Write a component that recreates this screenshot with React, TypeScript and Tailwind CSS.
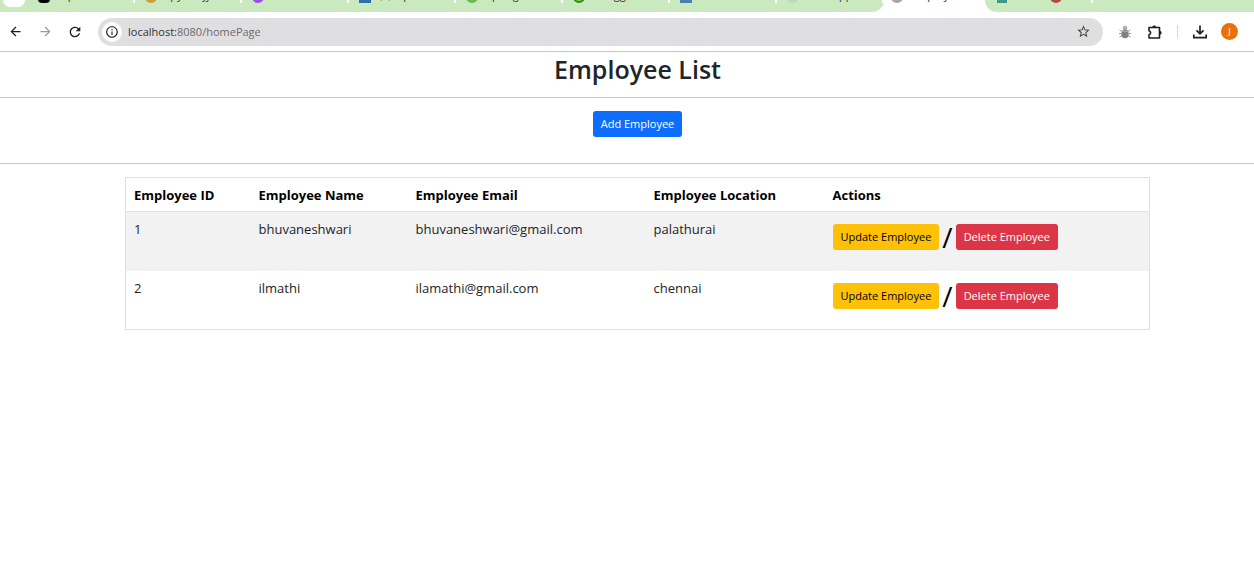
import type { ReactNode } from "react";
import { MdArrowBack, MdArrowForward, MdRefresh, MdInfoOutline, MdStarBorder } from "react-icons/md";

type TabInfo = { title: string; icon: string };

const leftTabs: TabInfo[] = [
  { title: "Inputs", icon: "rounded-sm bg-black" },
  { title: "spyder jy", icon: "rounded-full bg-[#c9a03c]" },
  { title: "Home", icon: "rounded-full bg-[#9a4fe0]" },
  { title: "(9) Open", icon: "bg-[#2f6fa8]" },
  { title: "Spring Boot", icon: "rounded-full bg-[#6cb84a]" },
  { title: "Swagger", icon: "rounded-full border-2 border-[#2f8a1c] bg-[#8fd45a]" },
  { title: "Records", icon: "bg-[#4a7fb0]" },
  { title: "Web app", icon: "rounded-full bg-[#b5dcc0]" },
];

type Employee = { id: number; name: string; email: string; location: string };

const employees: Employee[] = [
  { id: 1, name: "bhuvaneshwari", email: "bhuvaneshwari@gmail.com", location: "palathurai" },
  { id: 2, name: "ilmathi", email: "ilamathi@gmail.com", location: "chennai" },
];

function Tab({ title, icon }: TabInfo) {
  return (
    <div className="flex h-4 w-[107px] shrink-0 items-end gap-2 border-r-2 border-white pl-[10px]">
      <span className={`h-3 w-3 shrink-0 ${icon}`} />
      <span className="truncate text-[11px] leading-4 text-[#2c3a28]">{title}</span>
    </div>
  );
}

function TabStrip() {
  return (
    <div className="flex h-3 overflow-hidden bg-white">
      <div className="flex rounded-br-xl bg-[#cbe9bf]">
        <div className="flex w-[28px] shrink-0 items-start pl-[3px]">
          <span className="h-[7px] w-[22px] rounded-b-lg bg-white" />
        </div>
        <div className="-mt-[13px] flex">
          {leftTabs.map((tab) => (
            <Tab key={tab.title} {...tab} />
          ))}
        </div>
      </div>
      <div className="-mt-[13px] flex h-4 w-[101px] shrink-0 items-end gap-2 pl-[7px]">
        <span className="h-3 w-3 shrink-0 rounded-full bg-[#a3a3a8]" />
        <span className="truncate text-[11px] leading-4 text-[#333]">Employee</span>
      </div>
      <div className="flex min-w-0 flex-1 rounded-bl-xl bg-[#cbe9bf]">
        <div className="-mt-[13px] flex h-4 w-[108px] shrink-0 items-end gap-[43px] border-r-2 border-white pl-3">
          <span className="h-3 w-[10px] bg-[#3f9a86]" />
          <span className="h-3 w-3 rounded-full bg-[#b5483a]" />
        </div>
      </div>
    </div>
  );
}

function IconButton({ label, children }: { label: string; children: ReactNode }) {
  return (
    <button type="button" aria-label={label} className="flex size-[18px] shrink-0 items-center justify-center">
      {children}
    </button>
  );
}

function BugIcon() {
  return (
    <svg width="14" height="14" viewBox="0 0 14 14" aria-hidden="true">
      <g stroke="#9a9a9a" strokeWidth="1" fill="none">
        <path d="M4 6.500 1.500 5M3.500 8.500H1M4 10.500 1.500 12M10 6.500 12.500 5M10.500 8.500H13M10 10.500l2.500 1.500" />
      </g>
      <circle cx="7" cy="3" r="2.300" fill="#b0b0b0" />
      <ellipse cx="7" cy="8.900" rx="3.700" ry="4.300" fill="#808080" />
      <path d="M3.600 6.200h6.800" stroke="#c0c0c0" strokeWidth="0.800" />
    </svg>
  );
}

function PuzzleIcon() {
  return (
    <svg width="16" height="16" viewBox="0 0 16 16" aria-hidden="true">
      <path
        d="M2 3.500h10.500v10.500H2v-3.200a2.100 2.100 0 0 0 0-4.100Z"
        fill="none"
        stroke="#1f1f1f"
        strokeWidth="1.600"
        strokeLinejoin="round"
      />
      <path d="M5.500 3.500a1.800 1.800 0 0 1 3.600 0ZM12.500 7a1.800 1.800 0 0 1 0 3.600Z" fill="#1f1f1f" stroke="#1f1f1f" strokeWidth="0.600" />
    </svg>
  );
}

function DownloadIcon() {
  return (
    <svg width="16" height="16" viewBox="0 0 16 16" fill="none" stroke="#1f1f1f" strokeWidth="1.700" aria-hidden="true">
      <path d="M8 1.500v8M4.500 6.300 8 9.800l3.500-3.500M1.800 10.500v3.200h12.400v-3.200" />
    </svg>
  );
}

function Toolbar() {
  return (
    <div className="flex h-10 items-center border-b border-[#c8c8c8] bg-white pr-4 pl-[6px] text-[#1f1f1f]">
      <div className="flex gap-3">
        <IconButton label="Back"><MdArrowBack size={15} /></IconButton>
        <IconButton label="Forward"><MdArrowForward size={15} className="text-[#9a9a9a]" /></IconButton>
        <IconButton label="Reload"><MdRefresh size={16} /></IconButton>
      </div>
      <div className="ml-[14px] flex h-7 min-w-0 flex-1 items-center rounded-full bg-[#dfdfe1] pr-[11px] pl-1">
        <button type="button" aria-label="Site information" className="flex size-5 shrink-0 items-center justify-center rounded-full bg-white">
          <MdInfoOutline size={14} />
        </button>
        <div className="ml-[6px] flex-1 text-[11px] leading-4 text-[#6b6b6e]">
          <span className="text-[#333]">localhost:</span>8080/homePage
        </div>
        <IconButton label="Bookmark"><MdStarBorder size={15} className="text-[#444]" /></IconButton>
      </div>
      <div className="flex items-center pl-[13px]">
        <IconButton label="Bug extension"><BugIcon /></IconButton>
        <div className="ml-3 flex"><IconButton label="Extensions"><PuzzleIcon /></IconButton></div>
        <span className="ml-[13px] h-[13px] w-px bg-[#cbe3c4]" />
        <div className="ml-[13px] flex"><IconButton label="Downloads"><DownloadIcon /></IconButton></div>
        <button type="button" aria-label="Profile" className="ml-3 flex size-[17px] items-center justify-center rounded-full bg-[#e8710a] text-[9px] text-white">
          J
        </button>
      </div>
    </div>
  );
}

const cell = "px-2 pt-[7px] text-left align-top";

function EmployeeTable() {
  return (
    <table className="w-full max-w-[1025px] table-fixed border border-[#dee2e6] text-[13px] leading-5 text-[#212529]">
      <colgroup>
        <col className="w-[125px]" />
        <col className="w-[157px]" />
        <col className="w-[238px]" />
        <col className="w-[179px]" />
        <col />
      </colgroup>
      <thead className="text-black">
        <tr className="h-[34px] border-b border-[#dee2e6]">
          <th className={cell}>Employee ID</th>
          <th className={cell}>Employee Name</th>
          <th className={cell}>Employee Email</th>
          <th className={cell}>Employee Location</th>
          <th className={cell}>Actions</th>
        </tr>
      </thead>
      <tbody>
        {employees.map((e) => (
          <tr key={e.id} className="h-[59px] odd:bg-[#f2f2f2]">
            <td className={cell}>{e.id}</td>
            <td className={cell}>{e.name}</td>
            <td className={cell}>{e.email}</td>
            <td className={cell}>{e.location}</td>
            <td className={cell}>
              <div className="flex items-center gap-[3px] pt-[5px] text-[11px]">
                <button type="button" className="h-[26px] rounded-[3px] bg-[#ffc107] px-2 text-black">Update Employee</button>
                <span className="text-[28px] leading-[26px] text-black">/</span>
                <button type="button" className="h-[26px] rounded-[3px] bg-[#dc3545] px-2 text-white">Delete Employee</button>
              </div>
            </td>
          </tr>
        ))}
      </tbody>
    </table>
  );
}

export default function App() {
  return (
    <div className="min-h-screen bg-white font-['Open_Sans','Noto_Sans',sans-serif]">
      <TabStrip />
      <Toolbar />
      <main>
        <h1 className="flex h-[45px] justify-center pl-[21px] text-[25px] leading-[34px] font-semibold text-[#212529]">Employee List</h1>
        <div className="flex h-[67px] items-start justify-center border-y border-[#c8c8c8] pt-[13px] pl-[21px]">
          <button type="button" className="h-[26px] rounded-[3px] bg-[#0d6efd] px-2 text-[11px] text-white">Add Employee</button>
        </div>
        <div className="flex justify-center pt-[13px] pl-[21px]">
          <EmployeeTable />
        </div>
      </main>
    </div>
  );
}
